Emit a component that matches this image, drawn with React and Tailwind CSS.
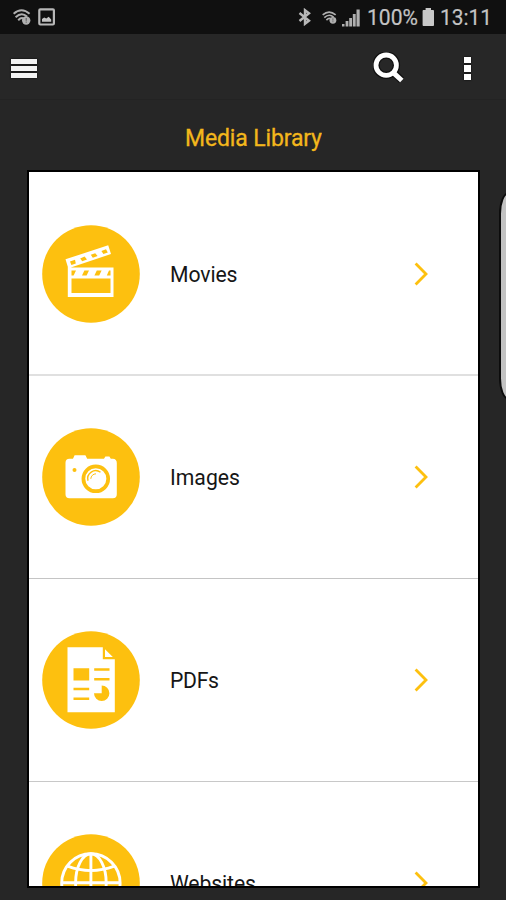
const YELLOW = '#fdc00f';

function Clapper() {
  return (
    <g>
      <path d="M23.5 34.3 66.2 20.3 69 29 28.8 42.6H71.5V72H25.8V41.8Z" fill="#fff" />
      <g fill={YELLOW}>
        <path d="M28 36.6 33 34.8 33.8 38.5 29.4 40ZM38.2 33.4 42.6 31.6 45 34.5 40.2 36.3ZM48.8 29.8 53.2 28.2 55.6 31 50.8 32.7ZM59.4 26 64 24.2 65.8 27.4 61.4 29Z" />
        <path d="M29.5 45.5H34L31.6 50.5H29.5ZM42.4 45.5H47L44.6 50.5H40ZM54.8 45.5H59.6L57.2 50.5H52.4ZM67 45.5H68.5V50.5H64.8Z" />
        <path d="M29.5 53.6H68.5V68H29.5Z" />
      </g>
    </g>
  );
}

function Camera() {
  return (
    <g>
      <path d="M27.5 30.8H31L32.6 27.3H43.4L45.2 30.8H62L63.4 28.4H67.4L68.8 30.8H70.8Q74.8 31 74.8 35V66.2Q74.8 70.2 70.8 70.2H27.5Q23.5 70.2 23.5 66.2V34.8Q23.5 30.8 27.5 30.8Z" fill="#fff" />
      <circle cx="32.5" cy="42" r="2" fill={YELLOW} />
      <circle cx="53.8" cy="50.8" r="12.4" fill="none" stroke={YELLOW} strokeWidth="3.7" />
      <path d="M46 52.8A8 8 0 0 1 58.5 44.3" fill="none" stroke={YELLOW} strokeWidth="1.4" />
      <path d="M48.8 50.8A5.2 5.2 0 0 1 54 45.8" fill="none" stroke={YELLOW} strokeWidth="1" />
    </g>
  );
}

function Document() {
  return (
    <g>
      <path d="M25.5 16.3H60.8V28.2H72.8V81.3H25.5Z" fill="#fff" />
      <path d="M63 18.2V26H70.8Z" fill="#fff" />
      <g fill={YELLOW}>
        <path d="M31.5 37.3H47.2V49.4H31.5ZM52.2 37.3H67.5V39.7H52.2ZM52.2 46.9H67.5V49.4H52.2ZM31.5 56.8H47.2V59.2H31.5ZM31.5 66.5H47.2V69H31.5Z" />
        <path d="M59.7 62.3V54.6A7.7 7.7 0 1 1 52 62.3Z" />
      </g>
    </g>
  );
}

function Globe() {
  return (
    <g fill="none" stroke="#fff" strokeWidth="2.9">
      <circle cx="48.9" cy="49" r="29.2" />
      <ellipse cx="48.9" cy="49" rx="15.3" ry="29.2" />
      <path d="M48.9 19V79M19 48.7H79M25.5 32.2Q48.9 41 72.3 32.2M25.5 65.8Q48.9 57 72.3 65.8" />
    </g>
  );
}

const items = [
  { label: 'Movies', Icon: Clapper, width: 67.5, row: 'h-[204px] border-b-2 border-[#e0e0e0]', pad: 'pt-[52.5px]' },
  { label: 'Images', Icon: Camera, width: 70, row: 'h-[203px] border-b-[1.5px] border-[#c4c4c4]', pad: 'pt-[51.5px]' },
  { label: 'PDFs', Icon: Document, width: 49, row: 'h-[203px] border-b-[1.5px] border-[#c8c8c8]', pad: 'pt-[51.5px]' },
  { label: 'Websites', Icon: Globe, width: 86, row: 'h-[203px]', pad: 'pt-[51.5px]' },
];

function Row({ item }) {
  const { label, Icon, width, row, pad } = item;
  return (
    <div className={`shrink-0 pl-[12.5px] ${row} ${pad}`}>
      <div className="flex h-[98px] items-center">
        <svg className="h-[98px] w-[98px] shrink-0" viewBox="0 0 98 98">
          <circle cx="49" cy="49" r="48.8" fill={YELLOW} />
          <Icon />
        </svg>
        <svg className="ml-[30px] h-8 w-[244px] shrink-0" viewBox="0 0 244 32">
          <text x="0" y="24" fontSize="21.2" textLength={width} fill="#161616">{label}</text>
        </svg>
        <svg className="h-6 w-4 shrink-0" viewBox="0 0 16 24">
          <path d="M1.6 1.5 12 12 1.6 22.5" fill="none" stroke={YELLOW} strokeWidth="2.8" />
        </svg>
      </div>
    </div>
  );
}

function WifiAlert({ className }) {
  return (
    <svg className={className} viewBox="0 0 18 16" fill="none" stroke="#b0b0b0" strokeWidth="2">
      <path d="M.6 4.8Q8.5-2.2 16.6 4.8M2.6 8.2Q8.5 2.6 14 7.5M5.2 11.2Q8 8.2 10.5 9.4" />
      <circle cx="13.2" cy="11.5" r="4.2" fill="#b0b0b0" stroke="none" />
      <path d="M13.2 9V11.8M13.2 12.6V13.7" stroke="#555" strokeWidth="1" />
    </svg>
  );
}

function StatusBar() {
  return (
    <div className="flex h-[34px] shrink-0 items-center bg-[#101010] text-[#c4c4c4]">
      <WifiAlert className="ml-[13px] h-4 w-[18px]" />
      <svg className="ml-[7px] h-[18px] w-[18px]" viewBox="0 0 18 18" fill="none">
        <rect x="1.3" y="1.3" width="14.6" height="15.2" rx="1" stroke="#b8b8b8" strokeWidth="2.2" />
        <path d="M4 13.7V11L6.2 9.4 8.3 10.4 10.7 8.7 13.2 11.5V13.7Z" fill="#c4c4c4" />
      </svg>
      <svg className="ml-[242px] h-[18px] w-[14px]" viewBox="0 0 14 18" fill="none" stroke="#b8b8b8" strokeWidth="2.4">
        <path d="M1.5 5 11 12.8 7 15.8V2.2L11 5.2 1.5 13" />
      </svg>
      <WifiAlert className="ml-[9px] h-[13px] w-[17px]" />
      <svg className="ml-[4px] h-[19px] w-[19px]" viewBox="0 0 19 19" fill="#b0b0b0">
        <path d="M0 16H2.5V18.5H0ZM3.6 13H6.4V18.5H3.6ZM7.2 10H10V18.5H7.2ZM10.8 6H13.7V18.5H10.8ZM14.5 1.5H17.7V18.5H14.5Z" />
      </svg>
      <svg className="ml-[5.5px] h-[34px] w-[52px]" viewBox="0 0 52 34" fill="#c4c4c4">
        <text x="0" y="25" fontSize="22" textLength="51" lengthAdjust="spacingAndGlyphs" stroke="#c4c4c4" strokeWidth=".2">100%</text>
      </svg>
      <svg className="ml-[3px] h-[18px] w-[13px]" viewBox="0 0 13 18" fill="#c8c8c8">
        <path d="M3.6 0H9V2H11.2Q12 2 12 3V17Q12 18 11.2 18H1.4Q.6 18 .6 17V3Q.6 2 1.4 2H3.6Z" />
      </svg>
      <svg className="ml-[5.5px] h-[34px] w-[54px]" viewBox="0 0 54 34" fill="#c4c4c4">
        <text x="0" y="25" fontSize="22" textLength="52" lengthAdjust="spacingAndGlyphs" stroke="#c4c4c4" strokeWidth=".2">13:11</text>
      </svg>
    </div>
  );
}

function Toolbar() {
  return (
    <div className="flex h-[66px] shrink-0 items-center border-b border-[#232323] bg-[#272727]">
      <div className="ml-[11px] mt-[3px] flex w-[26px] flex-col gap-[2px]">
        <div className="h-[5px] bg-[#f2f2f2] shadow-[0_0_2px_#000]" />
        <div className="h-[5px] bg-[#f2f2f2] shadow-[0_0_2px_#000]" />
        <div className="h-[5px] bg-[#f2f2f2] shadow-[0_0_2px_#000]" />
      </div>
      <svg className="ml-[336px] mt-[3px] h-8 w-8" viewBox="0 0 32 32" fill="none">
        <g stroke="#111" strokeWidth="7.4">
          <circle cx="13.2" cy="13.2" r="10.2" />
          <path d="M21 21 28.5 28.2" />
        </g>
        <g stroke="#fff">
          <circle cx="13.2" cy="13.2" r="10.2" strokeWidth="4.8" />
          <path d="M20 20.4 28.8 28.5" strokeWidth="5" />
        </g>
      </svg>
      <div className="ml-[59px] mt-[3px] flex w-[7px] flex-col gap-[2px]">
        <div className="h-[6px] bg-white shadow-[0_0_2px_#000]" />
        <div className="h-[7px] bg-white shadow-[0_0_2px_#000]" />
        <div className="h-[6px] bg-white shadow-[0_0_2px_#000]" />
      </div>
    </div>
  );
}

export default function App() {
  return (
    <div className="relative flex h-[900px] w-[506px] flex-col overflow-hidden bg-[#262626] font-['Roboto',sans-serif]">
      <StatusBar />
      <Toolbar />
      <div className="flex h-[70px] shrink-0 justify-center">
        <svg className="h-[70px] w-[138px]" viewBox="0 0 138 70">
          <text x="1" y="46" fontSize="23" textLength="137" fill="#f3b71c" stroke="#f3b71c" strokeWidth=".3">Media Library</text>
        </svg>
      </div>
      <div className="ml-[27px] flex h-[718px] w-[453px] shrink-0 flex-col overflow-hidden border-2 border-black bg-white">
        {items.map((item) => <Row key={item.label} item={item} />)}
      </div>
      <div className="absolute left-[499px] top-[192px] h-[208px] w-[20px] rounded-[12px/26px] border-2 border-[#0c0c0c] bg-[#c2c2c2]" />
    </div>
  );
}
